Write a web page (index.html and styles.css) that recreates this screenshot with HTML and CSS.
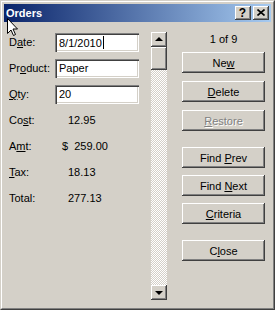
FILE: index.html
```html
<!DOCTYPE html>
<html lang="en">
<head>
    <meta charset="UTF-8">
    <title>Orders</title>
    <link rel="stylesheet" href="styles.css">
</head>
<body>
    <div class="window">
        <div class="frame">
            <div class="titlebar">
                <span class="title">Orders</span>
                <div class="caption-buttons">
                    <div class="cap-btn help">?</div>
                    <div class="cap-btn">
                        <svg width="8" height="7" viewBox="0 0 8 7"><path d="M0.5 0.5 L7.5 6.5 M7.5 0.5 L0.5 6.5" stroke="#000" stroke-width="1.6"/></svg>
                    </div>
                </div>
            </div>
            <div class="dialog">
                <div class="fields">
                    <div class="row">
                        <span class="lbl">D<u>a</u>te:</span>
                        <div class="input">8/1/2010<span class="caret"></span></div>
                    </div>
                    <div class="row">
                        <span class="lbl">Pr<u>o</u>duct:</span>
                        <div class="input">Paper</div>
                    </div>
                    <div class="row">
                        <span class="lbl"><u>Q</u>ty:</span>
                        <div class="input">20</div>
                    </div>
                    <div class="row">
                        <span class="lbl">Co<u>s</u>t:</span>
                        <span class="value">12.95</span>
                    </div>
                    <div class="row">
                        <span class="lbl">A<u>m</u>t:</span>
                        <span class="value currency">$&nbsp; 259.00</span>
                    </div>
                    <div class="row">
                        <span class="lbl"><u>T</u>ax:</span>
                        <span class="value">18.13</span>
                    </div>
                    <div class="row">
                        <span class="lbl">Total:</span>
                        <span class="value">277.13</span>
                    </div>
                </div>

                <div class="scrollbar">
                    <div class="sb-btn"><span class="arrow up"></span></div>
                    <div class="sb-thumb"></div>
                    <div class="sb-track"></div>
                    <div class="sb-btn"><span class="arrow down"></span></div>
                </div>

                <div class="actions">
                    <div class="counter">1 of 9</div>
                    <div class="btn"><span>Ne<u>w</u></span></div>
                    <div class="btn gap-md"><span><u>D</u>elete</span></div>
                    <div class="btn gap-md disabled"><span><u>R</u>estore</span></div>
                    <div class="btn gap-lg"><span>Find <u>P</u>rev</span></div>
                    <div class="btn"><span>Find <u>N</u>ext</span></div>
                    <div class="btn"><span><u>C</u>riteria</span></div>
                    <div class="btn gap-lg"><span>C<u>l</u>ose</span></div>
                </div>
            </div>
        </div>

        <svg class="cursor" width="12" height="19" viewBox="0 0 12 19">
            <path d="M0.5 0.5 L0.5 15.5 L4 12 L6.5 17.5 L8.5 16.5 L6 11 L10.5 11 Z" fill="#fff" stroke="#000" stroke-width="1"/>
        </svg>
    </div>
</body>
</html>
```

FILE: styles.css
```css
body {
    margin: 0;
    background-color: #d4d0c8;
}
.window {
    position: relative;
    width: 275px;
    height: 310px;
    box-sizing: border-box;
    border: 1px solid;
    border-color: #d4d0c8 #404040 #404040 #d4d0c8;
    background-color: #d4d0c8;
    font-family: "Liberation Sans", Arial, sans-serif;
    font-size: 11px;
    color: #000;
}
.frame {
    height: 100%;
    box-sizing: border-box;
    border: 1px solid;
    border-color: #fff #808080 #808080 #fff;
    padding: 2px;
    display: flex;
    flex-direction: column;
}
.titlebar {
    height: 18px;
    flex: none;
    display: flex;
    align-items: center;
    justify-content: space-between;
    padding: 0 2px;
    background: linear-gradient(to right, #0a246a, #a6caf0);
}
.title {
    color: #fff;
    font-weight: bold;
}
.caption-buttons {
    display: flex;
    gap: 2px;
}
.cap-btn, .btn, .sb-btn, .sb-thumb {
    background-color: #d4d0c8;
    box-shadow: inset -1px -1px #404040, inset 1px 1px #fff, inset -2px -2px #808080, inset 2px 2px #d4d0c8;
}
.cap-btn {
    width: 16px;
    height: 14px;
    display: flex;
    align-items: center;
    justify-content: center;
    box-sizing: border-box;
    padding: 0 1px 1px 0;
}
.cap-btn.help {
    font-weight: bold;
    font-size: 12px;
    line-height: 14px;
}
.dialog {
    flex: 1;
    display: flex;
}
.fields {
    width: 130px;
    padding: 7px 0 0 5px;
    margin-right: 12px;
}
.row {
    height: 26px;
    display: flex;
    align-items: center;
}
.lbl {
    width: 46px;
    flex: none;
}
.input {
    width: 84px;
    height: 19px;
    box-sizing: border-box;
    padding: 3px 0 0 4px;
    background-color: #fff;
    box-shadow: inset 1px 1px #808080, inset 2px 2px #404040, inset -1px -1px #fff, inset -2px -2px #d4d0c8;
    white-space: nowrap;
}
.caret {
    display: inline-block;
    width: 1px;
    height: 13px;
    margin-left: 1px;
    vertical-align: -2px;
    background-color: #000;
}
.value {
    margin-left: 13px;
}
.value.currency {
    margin-left: 7px;
}
.scrollbar {
    width: 16px;
    flex: none;
    margin: 10px 0 6px;
    display: flex;
    flex-direction: column;
}
.sb-btn {
    height: 15px;
    display: flex;
    align-items: center;
    justify-content: center;
}
.sb-thumb {
    height: 23px;
}
.sb-track {
    flex: 1;
    background: repeating-conic-gradient(#fff 0 25%, #d4d0c8 0 50%) 0 0 / 2px 2px;
}
.arrow {
    width: 0;
    height: 0;
    border-left: 4px solid transparent;
    border-right: 4px solid transparent;
}
.arrow.up {
    border-bottom: 4px solid #000;
    margin-bottom: 1px;
}
.arrow.down {
    border-top: 4px solid #000;
}
.actions {
    width: 83px;
    margin-left: 15px;
    display: flex;
    flex-direction: column;
}
.counter {
    margin-top: 11px;
    height: 13px;
    line-height: 13px;
    text-align: center;
    margin-bottom: -1px;
}
.btn {
    height: 21px;
    margin-top: 7px;
    display: flex;
    align-items: center;
    justify-content: center;
}
.btn.gap-md {
    margin-top: 8px;
}
.btn.gap-lg {
    margin-top: 16px;
}
.btn.disabled {
    color: #808080;
    text-shadow: 1px 1px #fff;
}
.cursor {
    position: absolute;
    left: 6px;
    top: 17px;
}
```
